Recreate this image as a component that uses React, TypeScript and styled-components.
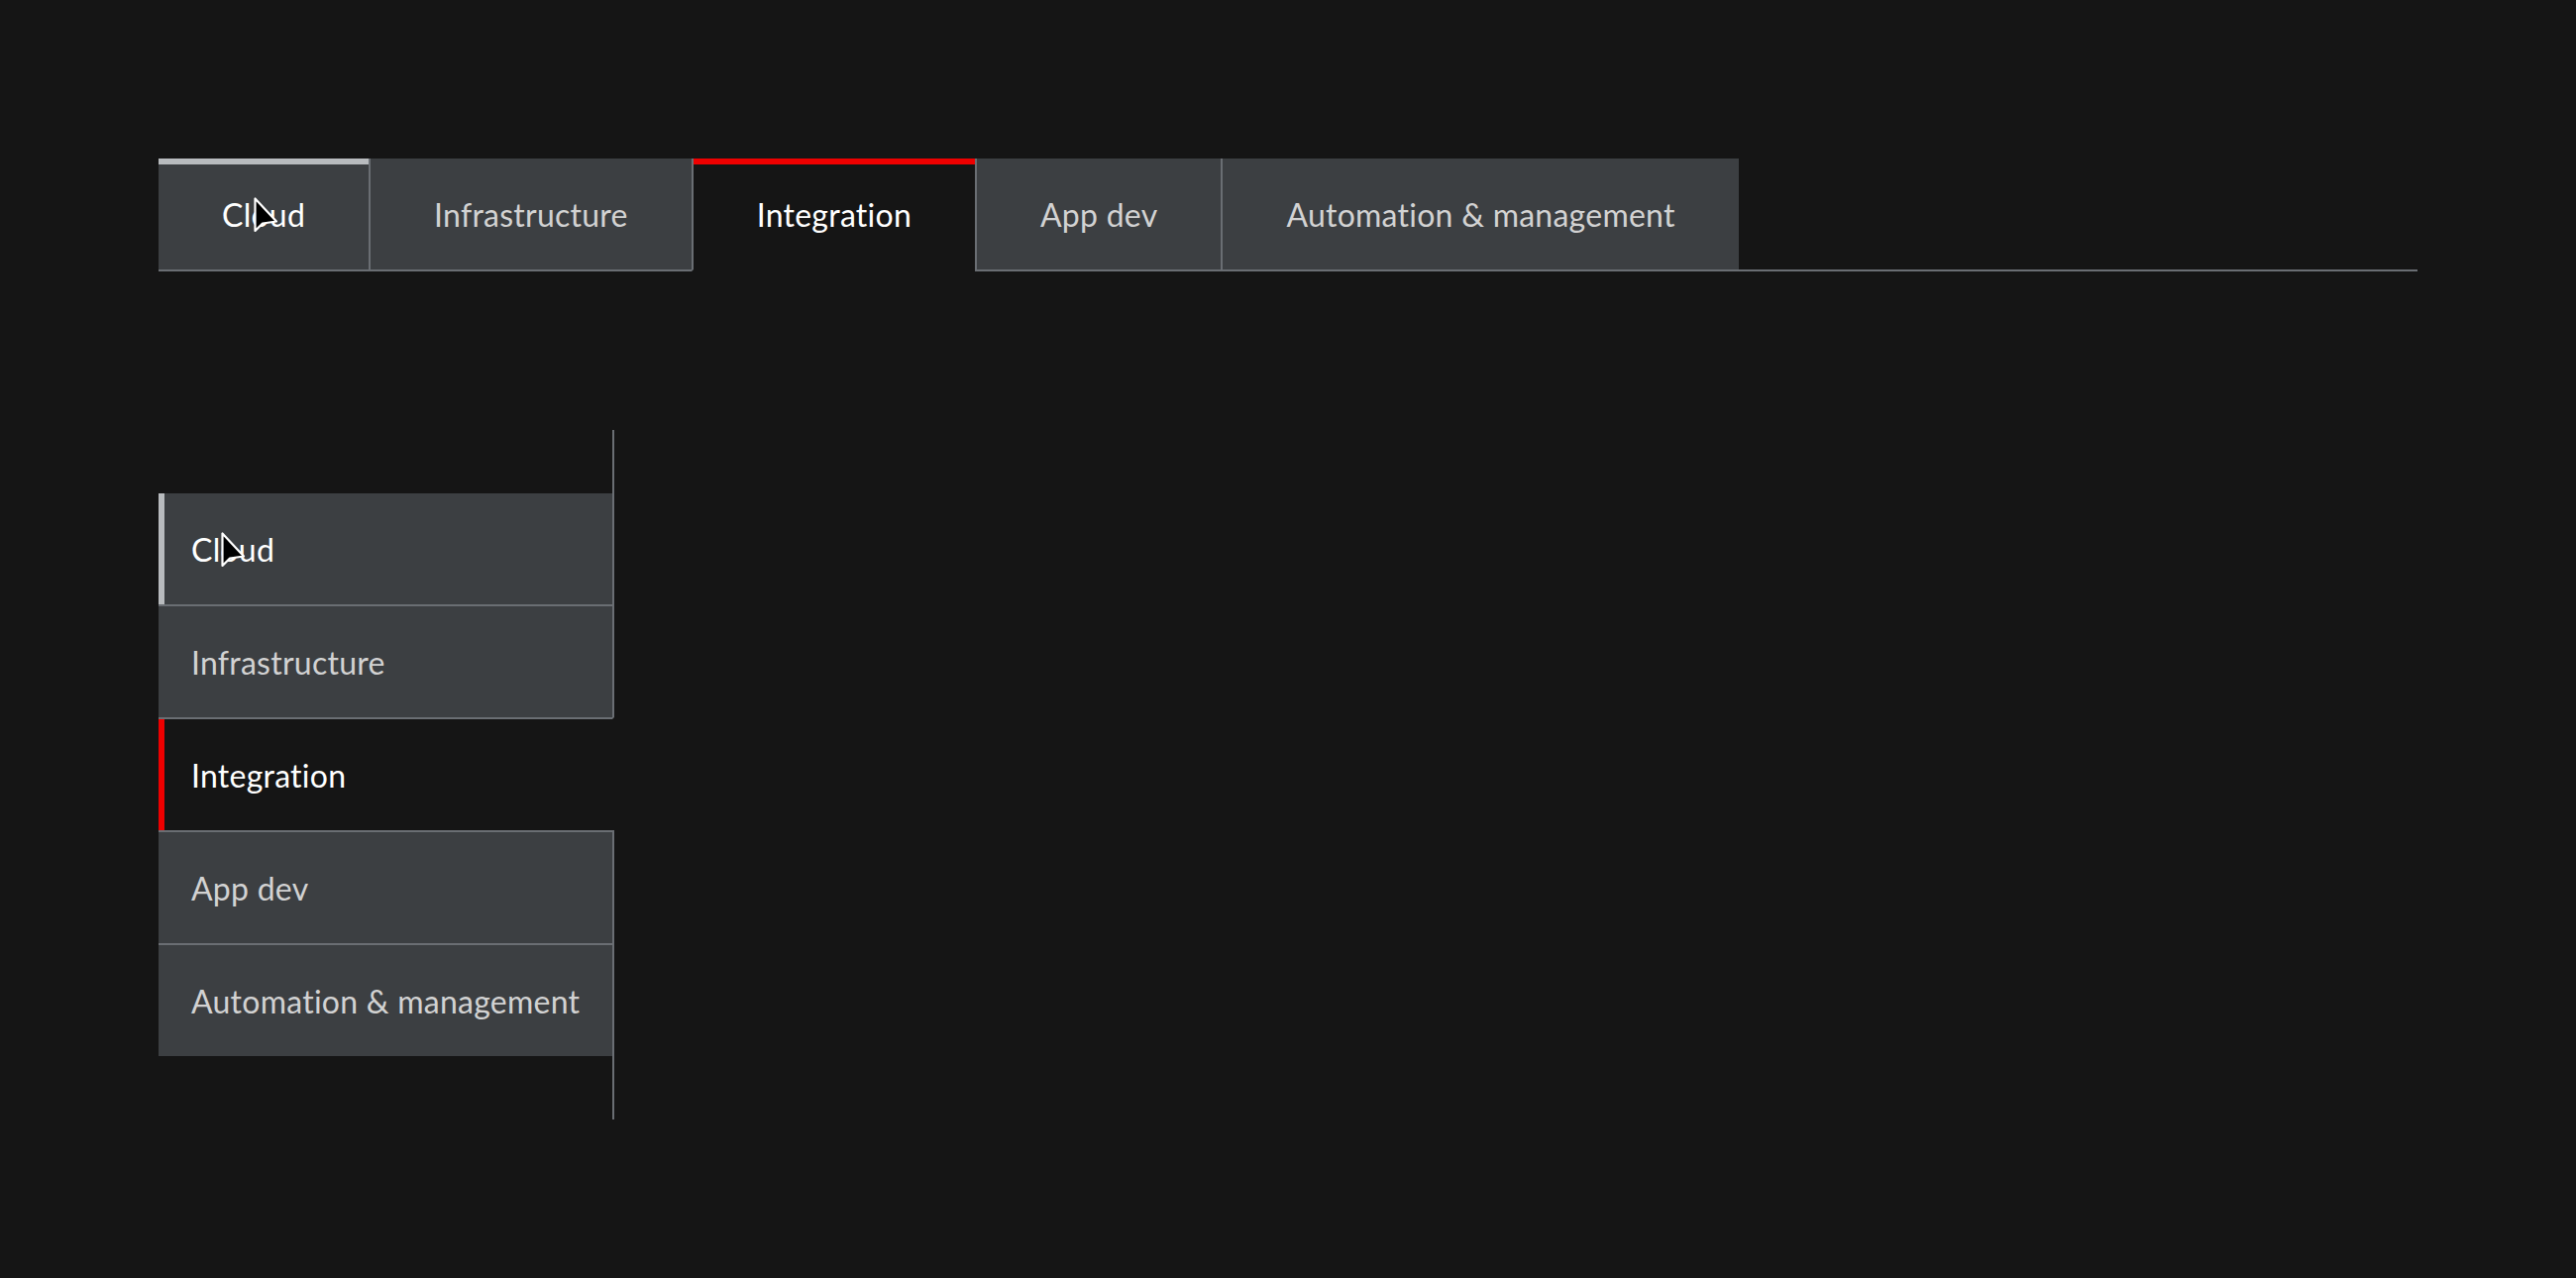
import React from "react"
import styled, { createGlobalStyle } from "styled-components"

const tabs = ["Cloud", "Infrastructure", "Integration", "App dev", "Automation & management"]
const ACTIVE = 2
const HOVER = 0

const Colors = {
  page: "#151515",
  tab: "#3c3f42",
  line: "#6a6e73",
  text: "#d2d2d2",
  textStrong: "#ffffff",
  hover: "#b8bbbe",
  red: "#ee0000",
}

const GlobalStyle = createGlobalStyle`
  html, body {
    margin: 0;
    background: ${Colors.page};
  }
  body {
    font-family: Lato, "Open Sans", sans-serif;
  }
`

const indicator = (active: boolean, hover: boolean) => (active ? Colors.red : hover ? Colors.hover : "transparent")

const Cursor: React.FC<{ x: number; y: number }> = ({ x, y }) => (
  <S.Cursor style={{ left: x, top: y }} width="26" height="38" viewBox="0 0 26 38">
    <path d="M1.5 1.5 L1.5 34 L9 26.5 L23 24.5 Z" fill="#000" stroke="#fff" strokeWidth="2.2" strokeLinejoin="round" />
  </S.Cursor>
)

export default function App() {
  return (
    <>
      <GlobalStyle />
      <S.Page>
        <S.HList>
          {tabs.map((t, i) => (
            <S.HTab key={t} $first={i === 0} $active={i === ACTIVE} $hover={i === HOVER}>
              {t}
              {i === HOVER && <Cursor x={96} y={39} />}
            </S.HTab>
          ))}
          <S.HRule />
        </S.HList>

        <S.VList>
          <S.VRule />
          {tabs.map((t, i) => (
            <S.VTab key={t} $first={i === 0} $active={i === ACTIVE} $hover={i === HOVER}>
              {t}
              {i === HOVER && <Cursor x={63} y={39} />}
            </S.VTab>
          ))}
          <S.VRule />
        </S.VList>
      </S.Page>
    </>
  )
}

interface TabProps {
  $first: boolean
  $active: boolean
  $hover: boolean
}

const S = {
  Page: styled.div`
    display: flex;
    flex-direction: column;
    align-items: flex-start;
    gap: 160px;
    padding: 160px;
  `,
  HList: styled.div`
    display: flex;
    width: 2280px;
  `,
  HTab: styled.div<TabProps>`
    position: relative;
    padding: 33px 64px 31px;
    font-size: 32px;
    line-height: 48px;
    letter-spacing: 0.25px;
    white-space: nowrap;
    color: ${({ $active, $hover }) => ($active || $hover ? Colors.textStrong : Colors.text)};
    background: ${({ $active }) => ($active ? Colors.page : Colors.tab)};
    border-left: ${({ $first }) => ($first ? "none" : `2px solid ${Colors.line}`)};
    border-bottom: 2px solid ${({ $active }) => ($active ? Colors.page : Colors.line)};
    box-shadow: inset 0 6px 0 ${({ $active, $hover }) => indicator($active, $hover)};
  `,
  HRule: styled.div`
    flex: 1;
    border-bottom: 2px solid ${Colors.line};
  `,
  VList: styled.div`
    display: flex;
    flex-direction: column;
    width: 460px;
  `,
  VRule: styled.div`
    height: 64px;
    border-right: 2px solid ${Colors.line};
  `,
  VTab: styled.div<TabProps>`
    position: relative;
    padding: 33px 32px 31px 33px;
    font-size: 32px;
    line-height: 48px;
    letter-spacing: 0.25px;
    white-space: nowrap;
    color: ${({ $active, $hover }) => ($active || $hover ? Colors.textStrong : Colors.text)};
    background: ${({ $active }) => ($active ? Colors.page : Colors.tab)};
    border-top: ${({ $first }) => ($first ? "none" : `2px solid ${Colors.line}`)};
    border-right: 2px solid ${({ $active }) => ($active ? Colors.page : Colors.line)};
    box-shadow: inset 6px 0 0 ${({ $active, $hover }) => indicator($active, $hover)};
  `,
  Cursor: styled.svg`
    position: absolute;
    pointer-events: none;
  `,
}
